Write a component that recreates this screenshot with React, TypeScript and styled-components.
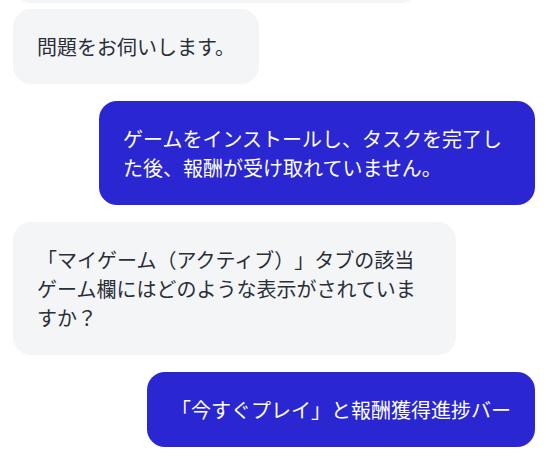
import React from "react";
import styled, { createGlobalStyle } from "styled-components";

const GlobalStyle = createGlobalStyle`
  html, body {
    margin: 0;
    padding: 0;
    background: #ffffff;
  }
  body {
    font-family: "Noto Sans CJK JP", "Noto Sans", sans-serif;
  }
  * { box-sizing: border-box; }
`;

const Thread = styled.div`
  height: 100vh;
  overflow: hidden;
  display: flex;
  flex-direction: column;
  justify-content: flex-end;
  padding: 0 18px 9px 13px;
`;

const Row = styled.div<{ $mine: boolean; $grouped: boolean }>`
  display: flex;
  justify-content: ${(p) => (p.$mine ? "flex-end" : "flex-start")};
  margin-top: ${(p) => (p.$grouped ? "6px" : "17px")};
  &:first-child { margin-top: 0; }
`;

const Bubble = styled.div<{ $mine: boolean }>`
  max-width: ${(p) => (p.$mine ? "436px" : "443px")};
  padding: 23px 24px;
  border-radius: 18px;
  font-size: 20px;
  line-height: 29px;
  text-spacing-trim: space-all;
  word-break: normal;
  line-break: strict;
  background: ${(p) => (p.$mine ? "#2a26d1" : "#f4f5f7")};
  color: ${(p) => (p.$mine ? "#ffffff" : "#2a2e37")};
`;

type Msg = { mine: boolean; text: string };

const messages: Msg[] = [
  { mine: false, text: "ご連絡いただきありがとうございます。" },
  { mine: false, text: "問題をお伺いします。" },
  { mine: true, text: "ゲームをインストールし、タスクを完了した後、報酬が受け取れていません。" },
  { mine: false, text: "「マイゲーム（アクティブ）」タブの該当ゲーム欄にはどのような表示がされていますか？" },
  { mine: true, text: "「今すぐプレイ」と報酬獲得進捗バー" },
];

export default function App() {
  return (
    <>
      <GlobalStyle />
      <Thread>
        {messages.map((m, i) => (
          <Row key={i} $mine={m.mine} $grouped={i > 0 && messages[i - 1].mine === m.mine}>
            <Bubble $mine={m.mine}>{m.text}</Bubble>
          </Row>
        ))}
      </Thread>
    </>
  );
}
